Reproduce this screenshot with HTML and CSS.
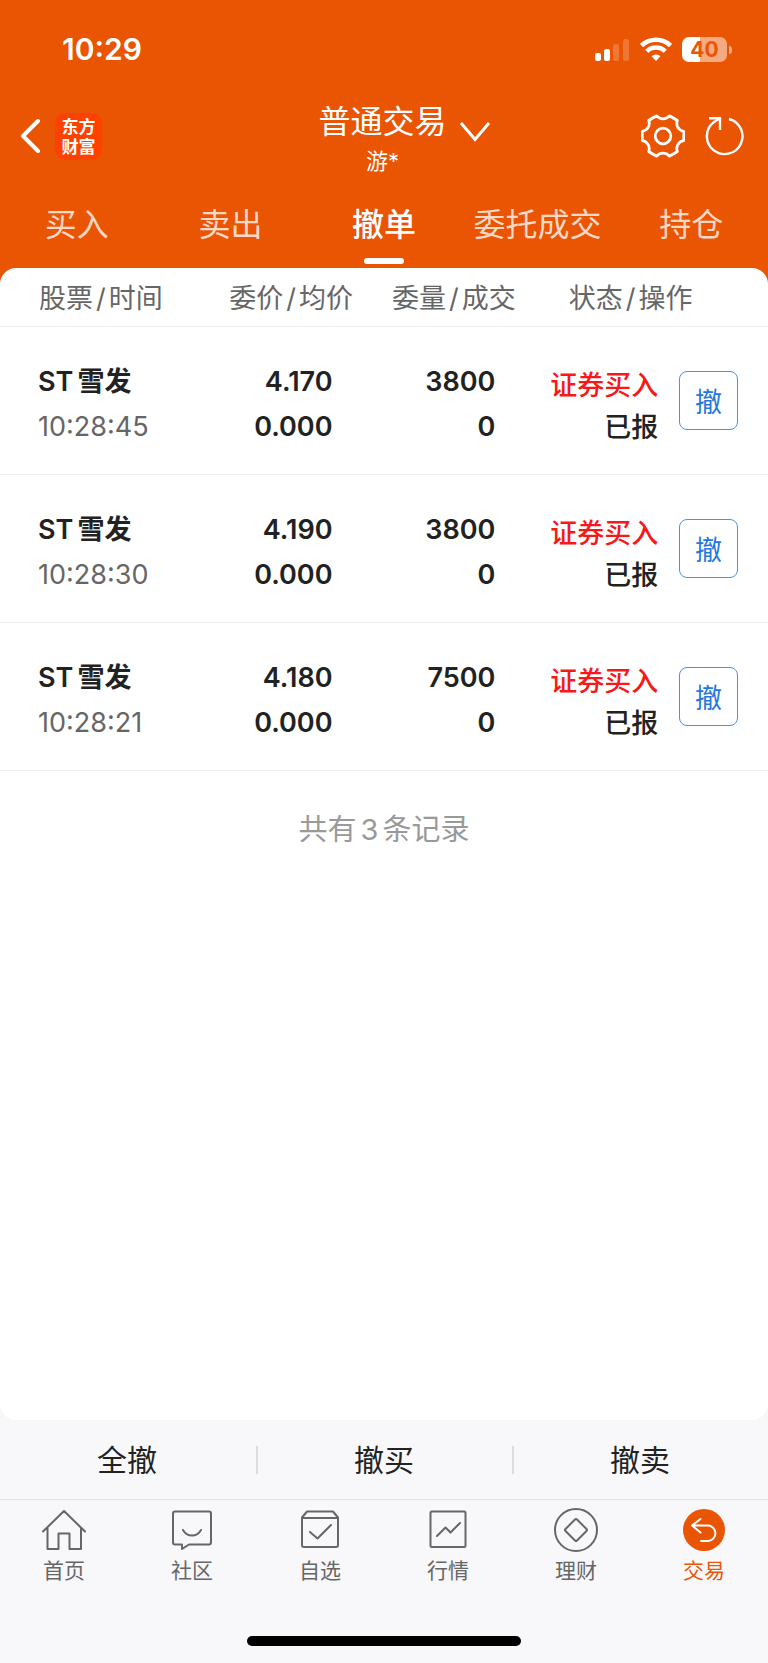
FILE: index.html
```html
<!DOCTYPE html>
<html lang="zh-CN">
<head>
    <meta charset="UTF-8">
    <meta name="viewport" content="width=device-width, initial-scale=1.0">
    <title>普通交易</title>
    <link rel="stylesheet" href="styles.css">
</head>
<body>

    <header class="header">
        <div class="status-bar">
            <span class="clock">10:29</span>
            <div class="status-icons">
                <svg width="35" height="24" viewBox="0 0 35 24" fill="#fff">
                    <rect x="0" y="16" width="6" height="8" rx="2"/>
                    <rect x="9" y="12" width="6" height="12" rx="2"/>
                    <rect x="18" y="7" width="6" height="17" rx="2" opacity=".2"/>
                    <rect x="28" y="2" width="6" height="22" rx="2" opacity=".2"/>
                </svg>
                <svg width="32" height="24" viewBox="0 0 32 24" fill="none" stroke="#fff" stroke-width="4.500">
                    <path d="M1.500 8.500A21 21 0 0 1 30.500 8.500"/>
                    <path d="M6.800 14.300A13 13 0 0 1 25.200 14.300"/>
                    <path d="M16 24L11.500 19.300A6.500 6.500 0 0 1 20.500 19.300Z" fill="#fff" stroke="none"/>
                </svg>
                <div class="battery"><span>40</span></div>
            </div>
        </div>

        <div class="title-bar">
            <div class="title-left">
                <button class="icon-btn" aria-label="返回">
                    <svg width="20" height="36" viewBox="0 0 20 36" fill="none" stroke="#fff" stroke-width="4" stroke-linecap="round" stroke-linejoin="round">
                        <path d="M18 3L3 18L18 33"/>
                    </svg>
                </button>
                <a href="#" class="logo">东方<br>财富</a>
            </div>
            <div class="title-text">
                <h1>普通交易</h1>
                <p>游*</p>
            </div>
            <div class="title-right">
                <button class="icon-btn switch-btn" aria-label="切换账户">
                    <svg width="32" height="22" viewBox="0 0 32 22" fill="none" stroke="#fff" stroke-width="3">
                        <path d="M2 2L16 18.500L30 2"/>
                    </svg>
                </button>
                <div class="tools">
                    <button class="icon-btn" aria-label="设置">
                        <svg width="44" height="44" viewBox="-22 -22 44 44" fill="none" stroke="#fff" stroke-width="2.800" stroke-linejoin="round">
                            <path d="M20.600 -4.600Q21 0 20.600 4.600C15.500 5.500 12.500 10.700 14.300 15.500Q10.500 18.200 6.300 20.100C3 16.200 -3 16.200 -6.300 20.100Q-10.500 18.200 -14.300 15.500C-12.500 10.700 -15.500 5.500 -20.600 4.600Q-21 0 -20.600 -4.600C-15.500 -5.500 -12.500 -10.700 -14.300 -15.500Q-10.500 -18.200 -6.300 -20.100C-3 -16.200 3 -16.200 6.300 -20.100Q10.500 -18.200 14.300 -15.500C12.500 -10.700 15.500 -5.500 20.600 -4.600Z"/>
                            <circle r="7.800"/>
                        </svg>
                    </button>
                    <button class="icon-btn" aria-label="刷新">
                        <svg width="40" height="40" viewBox="-20 -20 40 40" fill="none" stroke="#fff" stroke-width="2.400">
                            <path d="M4 -17A17.800 17.800 0 1 1 -11.500 -13.600L-5 -18"/>
                            <path d="M-16 -17.800H-5V-6"/>
                        </svg>
                    </button>
                </div>
            </div>
        </div>

        <nav class="tabs">
            <a href="#">买入</a>
            <a href="#">卖出</a>
            <a href="#" class="active">撤单</a>
            <a href="#">委托成交</a>
            <a href="#">持仓</a>
        </nav>
    </header>

    <main class="panel">
        <table class="orders">
            <colgroup>
                <col class="col-stock">
                <col class="col-num">
                <col class="col-num">
                <col class="col-state">
                <col class="col-action">
            </colgroup>
            <thead>
                <tr>
                    <th>股票<i>/</i>时间</th>
                    <th>委价<i>/</i>均价</th>
                    <th>委量<i>/</i>成交</th>
                    <th colspan="2">状态<i>/</i>操作</th>
                </tr>
            </thead>
            <tbody>
                <tr>
                    <td><b><span class="st">ST</span>雪发</b><span class="time">10:28:45</span></td>
                    <td><b>4.170</b><b>0.000</b></td>
                    <td><b>3800</b><b>0</b></td>
                    <td class="state"><b class="buy">证券买入</b><b>已报</b></td>
                    <td><button class="cancel-btn">撤</button></td>
                </tr>
                <tr>
                    <td><b><span class="st">ST</span>雪发</b><span class="time">10:28:30</span></td>
                    <td><b>4.190</b><b>0.000</b></td>
                    <td><b>3800</b><b>0</b></td>
                    <td class="state"><b class="buy">证券买入</b><b>已报</b></td>
                    <td><button class="cancel-btn">撤</button></td>
                </tr>
                <tr>
                    <td><b><span class="st">ST</span>雪发</b><span class="time">10:28:21</span></td>
                    <td><b>4.180</b><b>0.000</b></td>
                    <td><b>7500</b><b>0</b></td>
                    <td class="state"><b class="buy">证券买入</b><b>已报</b></td>
                    <td><button class="cancel-btn">撤</button></td>
                </tr>
            </tbody>
        </table>
        <p class="total">共有<span>3</span>条记录</p>
    </main>

    <div class="actions">
        <button>全撤</button>
        <button>撤买</button>
        <button>撤卖</button>
    </div>

    <nav class="tabbar">
        <a href="#">
            <svg width="44" height="44" viewBox="0 0 44 44">
                <path d="M1 23.500L22 3L43 23.500M5.500 20V41H16.500V25.500H27.500V41H39V20"/>
            </svg>
            首页
        </a>
        <a href="#">
            <svg width="44" height="44" viewBox="0 0 44 44">
                <path d="M5 3.500H39Q41 3.500 41 5.500V34.500Q41 36.500 39 36.500H19L12 41V36.500H5Q3 36.500 3 34.500V5.500Q3 3.500 5 3.500Z"/>
                <path d="M13 22Q16 27.500 22 27.500T31 22"/>
            </svg>
            社区
        </a>
        <a href="#">
            <svg width="44" height="44" viewBox="0 0 44 44">
                <path d="M4 9.500L9 3.500H35L40 9.500V37Q40 39 38 39H6Q4 39 4 37ZM4 10H40"/>
                <path d="M12 24L19.500 30.500L33 17"/>
            </svg>
            自选
        </a>
        <a href="#">
            <svg width="44" height="44" viewBox="0 0 44 44">
                <rect x="4.500" y="3.500" width="35" height="35.500" rx="1.500"/>
                <path d="M11 28L19.500 19.500L24.500 24.500L34 15"/>
            </svg>
            行情
        </a>
        <a href="#">
            <svg width="44" height="44" viewBox="0 0 44 44">
                <circle cx="22" cy="22" r="21"/>
                <path d="M21 11.500Q22 10.500 23 11.500L32.500 21Q33.500 22 32.500 23L23 32.500Q22 33.500 21 32.500L11.500 23Q10.500 22 11.500 21Z"/>
            </svg>
            理财
        </a>
        <a href="#" class="active">
            <svg width="44" height="44" viewBox="0 0 44 44">
                <circle cx="22" cy="22" r="21" fill="#ea5504" stroke="none"/>
                <path d="M18.500 11L10 17.500L18.500 24.500M10 17.500H26.500A7.800 7.800 0 0 1 26.500 33H19" stroke="#fff"/>
            </svg>
            交易
        </a>
    </nav>
    <div class="home-indicator"></div>

</body>
</html>
```

FILE: styles.css
```css
* {
    box-sizing: border-box;
    margin: 0;
    padding: 0;
}
body {
    font-family: Inter, "Noto Sans CJK SC", sans-serif;
    display: flex;
    flex-direction: column;
    min-height: 100vh;
    background-color: #f8f8fb;
    color: #222;
}
a {
    text-decoration: none;
    color: inherit;
}
button {
    font-family: inherit;
    background: none;
    border: none;
    color: inherit;
    cursor: pointer;
}
svg {
    display: block;
}

/* header */
.header {
    background-color: #ea5504;
    color: white;
    padding-bottom: 20px;
}
.status-bar {
    display: flex;
    justify-content: space-between;
    align-items: center;
    height: 96px;
    padding: 2px 36px 0 62px;
}
.clock {
    font-size: 30px;
    font-weight: 600;
}
.status-icons {
    display: flex;
    align-items: center;
    gap: 10px;
}
.battery {
    position: relative;
    width: 45px;
    height: 25px;
    margin-right: 5px;
    border-radius: 7px;
    background: linear-gradient(to right, #fff 40%, #f5aa82 40%);
    color: #ea5504;
    font-size: 21px;
    font-weight: 700;
    line-height: 25px;
    text-align: center;
}
.battery::after {
    content: "";
    position: absolute;
    left: 47px;
    top: 9px;
    width: 3px;
    height: 8px;
    border-radius: 0 3px 3px 0;
    background-color: #f5aa82;
}
.title-bar {
    display: grid;
    grid-template-columns: 1fr auto 1fr;
    align-items: center;
    height: 80px;
    padding: 0 23px 0 20px;
}
.title-left,
.tools {
    display: flex;
    align-items: center;
}
.title-left {
    gap: 15px;
}
.tools {
    gap: 20px;
}
.title-right {
    display: flex;
    align-items: center;
    justify-content: space-between;
    padding-left: 12px;
}
.switch-btn {
    padding-bottom: 8px;
}
.logo {
    width: 47px;
    height: 47px;
    padding-top: 3px;
    border-radius: 10px;
    background-color: #ff4100;
    font-family: "Noto Sans CJK SC", sans-serif;
    font-size: 17px;
    font-weight: 700;
    line-height: 20px;
    text-align: center;
}
.title-text {
    padding-top: 5px;
    text-align: center;
}
.title-text h1 {
    margin-bottom: 4px;
    font-size: 32px;
    font-weight: 400;
    line-height: 40px;
}
.title-text p {
    font-size: 22px;
    line-height: 30px;
}
.tabs {
    display: grid;
    grid-template-columns: repeat(5, 1fr);
    padding-top: 24px;
}
.tabs a {
    display: flex;
    flex-direction: column;
    align-items: center;
    gap: 9px;
    color: #fbd9c6;
    font-size: 32px;
    line-height: 49px;
    white-space: nowrap;
}
.tabs a::after {
    content: "";
    width: 40px;
    height: 6px;
    border-radius: 3px;
}
.tabs .active {
    color: white;
    font-weight: 500;
}
.tabs .active::after {
    background-color: white;
}

/* order list */
.panel {
    flex: 1;
    margin-top: -16px;
    border-radius: 16px;
    background-color: white;
}
.orders {
    width: 100%;
    border-collapse: collapse;
    table-layout: fixed;
}
.col-num {
    width: 21.2%;
}
.col-state {
    width: 16%;
}
.col-action {
    width: 14.3%;
}
.orders tr {
    border-bottom: 1px solid #f0f0f0;
}
.orders th {
    height: 58px;
    color: #666;
    font-size: 27px;
    font-weight: 400;
    text-align: center;
    white-space: nowrap;
}
.orders th i {
    margin: 0 3px;
    font-style: normal;
}
.orders th:first-child {
    padding-left: 39px;
    text-align: left;
}
.orders th:last-child {
    padding-right: 42px;
}
.orders td {
    height: 148px;
    padding: 8px 40px 0 0;
    font-size: 27px;
    line-height: 45px;
    text-align: right;
    white-space: nowrap;
}
.orders td:first-child {
    padding-left: 38px;
    text-align: left;
}
.orders b,
.time {
    display: block;
    font-weight: 600;
}
.orders .time {
    color: #666;
    font-weight: 400;
}
.st {
    margin-right: 4px;
}
.orders .state {
    padding: 14px 0 0;
    line-height: 42px;
}
.orders .state b {
    font-weight: 500;
}
.orders .buy {
    color: #f91717;
}
.orders td:last-child {
    padding: 0 30px 0 0;
}
.cancel-btn {
    width: 59px;
    height: 59px;
    border: 1px solid #4a90f0;
    border-radius: 8px;
    color: #2378e2;
    font-size: 27px;
    vertical-align: middle;
}
.total {
    padding-top: 38px;
    color: #999;
    font-size: 29px;
    line-height: 42px;
    text-align: center;
}
.total span {
    margin: 0 4px;
}

/* bottom bars */
.actions {
    display: grid;
    grid-template-columns: repeat(3, 1fr);
    height: 79px;
    align-items: center;
}
.actions button {
    height: 28px;
    padding-right: 2px;
    font-size: 30px;
    line-height: 28px;
}
.actions button + button {
    border-left: 2px solid #ddd;
}
.tabbar {
    display: grid;
    grid-template-columns: repeat(6, 1fr);
    padding-top: 8px;
    border-top: 1px solid #e2e2e4;
}
.tabbar a {
    display: flex;
    flex-direction: column;
    align-items: center;
    gap: 3px;
    color: #666;
    font-size: 21px;
    line-height: 32px;
}
.tabbar svg {
    fill: none;
    stroke: #666;
    stroke-width: 2;
    stroke-linecap: round;
    stroke-linejoin: round;
}
.tabbar .active {
    color: #ea5504;
}
.home-indicator {
    width: 274px;
    height: 10px;
    margin: 49px auto 17px;
    border-radius: 5px;
    background-color: black;
}
```
